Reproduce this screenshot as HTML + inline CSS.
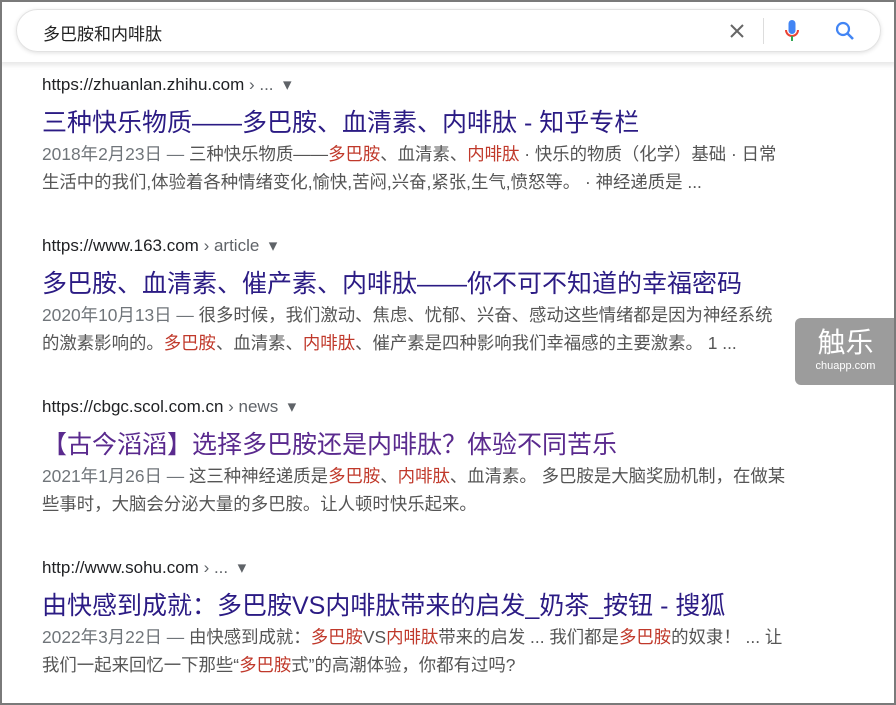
<!DOCTYPE html>
<html><head><meta charset="utf-8"><style>
*{margin:0;padding:0;box-sizing:border-box}
body{width:896px;height:705px;overflow:hidden;background:#fff;font-family:"Liberation Sans","Noto Sans CJK SC",sans-serif;position:relative}
.frame{position:absolute;inset:0;border:2px solid #7a7a7a;z-index:5;pointer-events:none}
.top{position:absolute;left:0;top:0;width:896px;height:62px;background:#fff;box-shadow:0 3px 5px rgba(0,0,0,.1)}
.sb{position:absolute;left:16px;top:9px;width:865px;height:43px;border:1px solid #e2e2e2;border-radius:22px;box-shadow:0 1px 4px rgba(0,0,0,.12)}
.q{position:absolute;left:26px;top:10px;font-size:17px;color:#222}
.r{position:absolute;left:42px}
.u{font-size:17px;color:#202124;height:20px}
.u span{color:#5f6368}
.t{font-size:25px;color:#2b1b84;margin-top:13px;line-height:31px;white-space:nowrap}
.s{font-size:17.4px;color:#555;line-height:28px;margin-top:1px;white-space:nowrap}
.s b{font-weight:normal;color:#c0392b}
.d{color:#70757a}
.wm{position:absolute;left:795px;top:318px;width:101px;height:67px;background:#9c9c9c;border-radius:6px 0 0 6px;color:#fff;text-align:center}
</style></head><body>
<div class="top"><div class="sb"><div class="q">多巴胺和内啡肽</div>
<svg style="position:absolute;left:712px;top:13px" width="16" height="16" viewBox="0 0 16 16"><path d="M2 2L14 14M14 2L2 14" stroke="#666" stroke-width="2"/></svg>
<div style="position:absolute;left:746px;top:8px;width:1px;height:26px;background:#ddd"></div>
<svg style="position:absolute;left:767px;top:9px" width="16" height="25" viewBox="0 0 16 25"><rect x="4.5" y="1" width="7" height="14" rx="3.5" fill="#4285f4"/><path d="M2 11a6 6 0 0 0 12 0" stroke="#ea4335" stroke-width="2" fill="none"/><path d="M8 17v5" stroke="#34a853" stroke-width="2"/></svg>
<svg style="position:absolute;left:818px;top:11px" width="20" height="20" viewBox="0 0 20 20"><circle cx="8" cy="8" r="6" stroke="#4285f4" stroke-width="2.2" fill="none"/><path d="M12.5 12.5L18 18" stroke="#4285f4" stroke-width="2.6"/></svg>
</div></div>

<div class="r" style="top:75px"><div class="u">https://zhuanlan.zhihu.com <span>› ... &nbsp;▾</span></div>
<div class="t">三种快乐物质——多巴胺、血清素、内啡肽 - 知乎专栏</div>
<div class="s"><span class="d">2018年2月23日 — </span>三种快乐物质——<b>多巴胺</b>、血清素、<b>内啡肽</b> · 快乐的物质（化学）基础 · 日常<br>生活中的我们,体验着各种情绪变化,愉快,苦闷,兴奋,紧张,生气,愤怒等。 · 神经递质是 ...</div></div>

<div class="r" style="top:236px"><div class="u">https://www.163.com <span>› article &nbsp;▾</span></div>
<div class="t">多巴胺、血清素、催产素、内啡肽——你不可不知道的幸福密码</div>
<div class="s"><span class="d">2020年10月13日 — </span>很多时候，我们激动、焦虑、忧郁、兴奋、感动这些情绪都是因为神经系统<br>的激素影响的。<b>多巴胺</b>、血清素、<b>内啡肽</b>、催产素是四种影响我们幸福感的主要激素。 1 ...</div></div>

<div class="r" style="top:397px"><div class="u">https://cbgc.scol.com.cn <span>› news &nbsp;▾</span></div>
<div class="t" style="color:#5a2a8e">【古今滔滔】选择多巴胺还是内啡肽？体验不同苦乐</div>
<div class="s"><span class="d">2021年1月26日 — </span>这三种神经递质是<b>多巴胺</b>、<b>内啡肽</b>、血清素。 多巴胺是大脑奖励机制，在做某<br>些事时，大脑会分泌大量的多巴胺。让人顿时快乐起来。</div></div>

<div class="r" style="top:558px"><div class="u">http://www.sohu.com <span>› ... &nbsp;▾</span></div>
<div class="t">由快感到成就：多巴胺VS内啡肽带来的启发_奶茶_按钮 - 搜狐</div>
<div class="s"><span class="d">2022年3月22日 — </span>由快感到成就：<b>多巴胺</b>VS<b>内啡肽</b>带来的启发 ... 我们都是<b>多巴胺</b>的奴隶！ ... 让<br>我们一起来回忆一下那些“<b>多巴胺</b>式”的高潮体验，你都有过吗?</div></div>

<div class="wm"><div style="font-size:28px;line-height:34px;margin-top:8px">触乐</div><div style="font-size:11px;line-height:12px">chuapp.com</div></div>
<div class="frame"></div>
</body></html>
